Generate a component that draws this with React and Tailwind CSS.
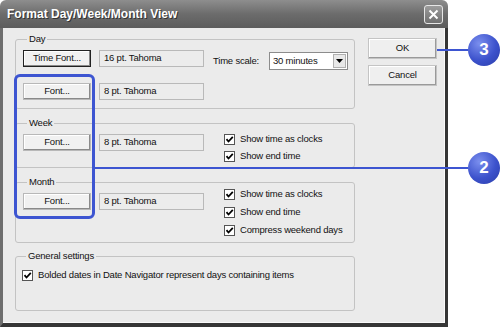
import React from 'react';

const Check = () => (
  <span className="w-[11px] h-[11px] shrink-0 bg-white border border-[#555] flex items-center justify-center">
    <svg width="9" height="9" viewBox="0 0 9 9">
      <path d="M1.5 4.2 L3.5 6.5 L7.8 1.8" fill="none" stroke="#000" strokeWidth="1.8" />
    </svg>
  </span>
);

const CheckRow = ({ label, h = 'h-[17px]' }) => (
  <div className={`flex items-center gap-[5px] ${h}`}>
    <Check />
    <span>{label}</span>
  </div>
);

const Button = ({ children, isDefault }) => (
  <div
    className={`w-[68px] h-[17px] shrink-0 flex items-center justify-center bg-[#f1f1f1] shadow-[inset_-1px_-1px_0_#8a8a8a,inset_1px_1px_0_#ffffff] border ${
      isDefault ? 'border-[#222]' : 'border-[#b8b8b8]'
    }`}
  >
    {children}
  </div>
);

const FontBox = ({ value }) => (
  <div className="w-[105px] h-[17px] shrink-0 border border-[#b9b9b9] bg-[#ececec] flex items-center pl-[4px]">
    {value}
  </div>
);

const Group = ({ title, className, children }) => (
  <fieldset className={`border border-[#c3c3c3] rounded-[3px] ${className}`}>
    <legend className="ml-[4px] px-[2px] h-[12px] leading-[12px]">{title}</legend>
    {children}
  </fieldset>
);

const Callout = ({ n, top }) => (
  <div
    className={`absolute left-[468px] ${top} w-[32px] h-[32px] rounded-full bg-[radial-gradient(circle_at_35%_30%,#7b8fee,#3c52cc_55%,#2a3da8)] flex items-center justify-center text-white font-bold text-[17px]`}
  >
    {n}
  </div>
);

export default function App() {
  return (
    <div className="relative w-[500px] h-[328px] bg-white font-['Liberation_Sans',Arial,sans-serif] text-[9.5px] tracking-[-0.2px] text-[#111] overflow-hidden">
      <div className="w-[448px] h-[327px] flex flex-col">
        {/* Title bar */}
        <div className="h-[28px] shrink-0 bg-gradient-to-b from-[#8e8e8e] via-[#6c6c6c] to-[#5c5c5c] rounded-t-[6px] flex items-center justify-between pl-[7px] pr-[5px]">
          <span className="text-white font-bold text-[12px] tracking-normal [text-shadow:1px_1px_0_#333]">
            Format Day/Week/Month View
          </span>
          <div className="w-[19px] h-[19px] rounded-[3px] border border-[#e6e6e6] bg-gradient-to-b from-[#9c9c9c] to-[#707070] flex items-center justify-center">
            <svg width="11" height="11" viewBox="0 0 11 11">
              <path d="M1.5 1.5 L9.5 9.5 M9.5 1.5 L1.5 9.5" stroke="#fff" strokeWidth="2" />
            </svg>
          </div>
        </div>

        {/* Body */}
        <div className="flex-1 flex gap-[13px] pl-[12px] pr-[8px] pt-[5px] bg-[#ebebeb] border-l-[3px] border-l-[#6e6e6e] border-r-[3px] border-r-[#363636] border-b-[4px] border-b-[#363636] shadow-[inset_-1px_-1px_0_#fafafa]">
          <div className="w-[340px] flex flex-col">
            <Group title="Day" className="h-[76px] pl-[7px]">
              <div className="flex items-start mt-[5px]">
                <Button isDefault>Time Font...</Button>
                <div className="ml-[8px]">
                  <FontBox value="16 pt. Tahoma" />
                </div>
                <span className="ml-[9px] mt-[4px]">Time scale:</span>
                <div className="ml-[10px] mt-[2px] w-[79px] h-[18px] bg-white border border-[#8c8c8c] flex items-center justify-between pl-[3px] pr-[1px]">
                  <span>30 minutes</span>
                  <div className="w-[13px] h-[14px] bg-[#e8e8e8] border border-[#b0b0b0] flex items-center justify-center">
                    <svg width="7" height="4" viewBox="0 0 7 4">
                      <path d="M0 0 H7 L3.5 4 Z" fill="#000" />
                    </svg>
                  </div>
                </div>
              </div>
              <div className="flex items-start mt-[13px] gap-[8px]">
                <Button>Font...</Button>
                <FontBox value="8 pt. Tahoma" />
              </div>
            </Group>

            <Group title="Week" className="h-[51px] mt-[8px] pl-[7px]">
              <div className="flex items-start mt-[5px]">
                <Button>Font...</Button>
                <div className="ml-[8px]">
                  <FontBox value="8 pt. Tahoma" />
                </div>
                <div className="ml-[20px] -mt-[3px] flex flex-col">
                  <CheckRow label="Show time as clocks" />
                  <CheckRow label="Show end time" />
                </div>
              </div>
            </Group>

            <Group title="Month" className="h-[67px] mt-[8px] pl-[7px]">
              <div className="flex items-start mt-[5px]">
                <Button>Font...</Button>
                <div className="ml-[8px]">
                  <FontBox value="8 pt. Tahoma" />
                </div>
                <div className="ml-[20px] -mt-[8px] flex flex-col">
                  <CheckRow label="Show time as clocks" h="h-[18px]" />
                  <CheckRow label="Show end time" h="h-[18px]" />
                  <CheckRow label="Compress weekend days" h="h-[18px]" />
                </div>
              </div>
            </Group>

            <Group title="General settings" className="h-[61px] mt-[7px] pl-[6px]">
              <div className="mt-[5px]">
                <CheckRow label="Bolded dates in Date Navigator represent days containing items" h="h-[16px]" />
              </div>
            </Group>
          </div>

          <div className="w-[69px] flex flex-col gap-[6px] pt-[5px]">
            <div className="h-[21px] flex items-center justify-center bg-[#efefef] border border-[#c4c4c4] shadow-[inset_-1px_-1px_0_#9a9a9a,inset_1px_1px_0_#ffffff]">
              OK
            </div>
            <div className="h-[21px] flex items-center justify-center bg-[#efefef] border border-[#c4c4c4] shadow-[inset_-1px_-1px_0_#9a9a9a,inset_1px_1px_0_#ffffff]">
              Cancel
            </div>
          </div>
        </div>
      </div>

      {/* Callouts */}
      <div className="absolute left-[14px] top-[74px] w-[81px] h-[145px] border-[3px] border-[#3d55d1] rounded-[6px]" />
      <div className="absolute left-[95px] top-[167px] w-[373px] h-[2px] bg-[#3d55d1]" />
      <div className="absolute left-[437px] top-[49px] w-[31px] h-[2px] bg-[#3d55d1]" />
      <Callout n="3" top="top-[34px]" />
      <Callout n="2" top="top-[152px]" />
    </div>
  );
}
